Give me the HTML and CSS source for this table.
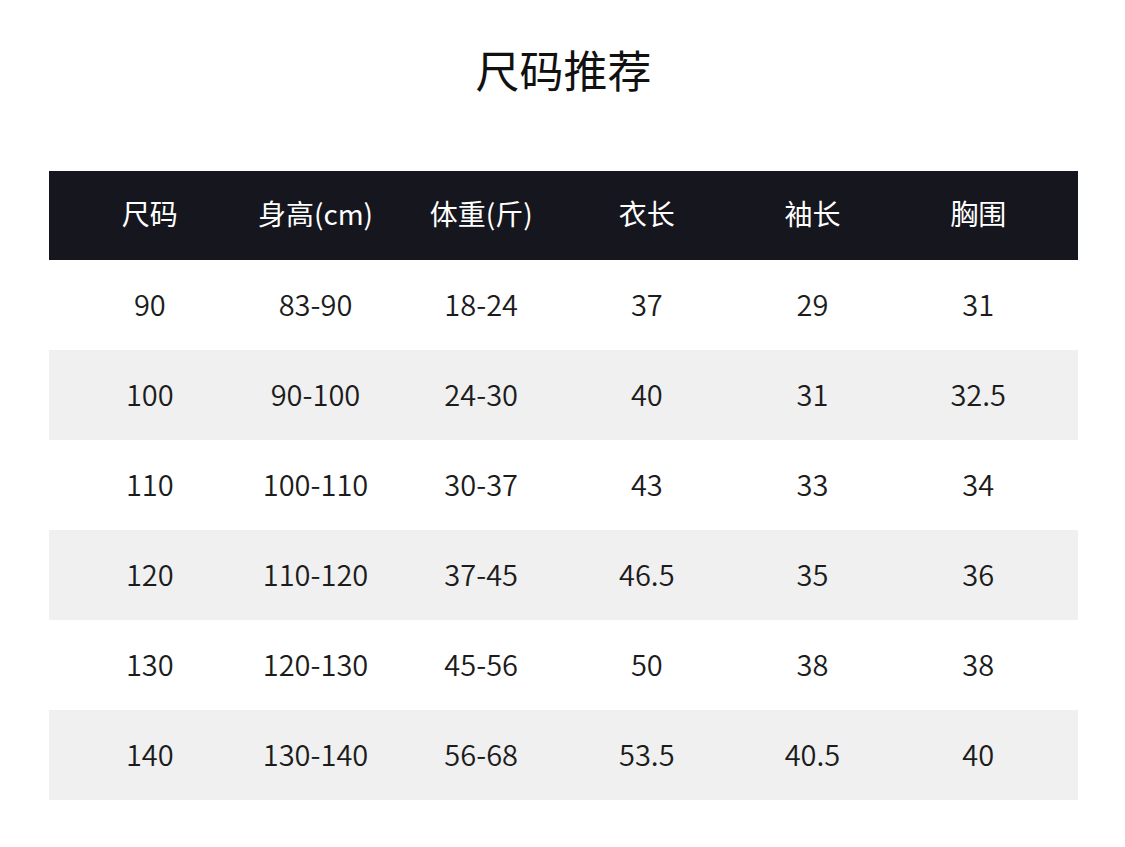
FILE: index.html
```html
<!DOCTYPE html>
<html lang="zh">
<head>
<meta charset="utf-8">
<title>尺码推荐</title>
<link rel="stylesheet" href="styles.css">
</head>
<body>
<div class="page">
  <h1 class="title">尺码推荐</h1>
  <div class="table">
    <div class="row head">
      <div>尺码</div><div>身高(cm)</div><div>体重(斤)</div><div>衣长</div><div>袖长</div><div>胸围</div>
    </div>
    <div class="row">
      <div>90</div><div>83-90</div><div>18-24</div><div>37</div><div>29</div><div>31</div>
    </div>
    <div class="row alt">
      <div>100</div><div>90-100</div><div>24-30</div><div>40</div><div>31</div><div>32.5</div>
    </div>
    <div class="row">
      <div>110</div><div>100-110</div><div>30-37</div><div>43</div><div>33</div><div>34</div>
    </div>
    <div class="row alt">
      <div>120</div><div>110-120</div><div>37-45</div><div>46.5</div><div>35</div><div>36</div>
    </div>
    <div class="row">
      <div>130</div><div>120-130</div><div>45-56</div><div>50</div><div>38</div><div>38</div>
    </div>
    <div class="row alt">
      <div>140</div><div>130-140</div><div>56-68</div><div>53.5</div><div>40.5</div><div>40</div>
    </div>
  </div>
</div>
</body>
</html>
```
FILE: styles.css
```css
html, body {
  margin: 0;
  padding: 0;
  background: #ffffff;
}
body {
  font-family: "Noto Sans CJK SC", "Noto Sans", sans-serif;
  color: #1a1a1a;
}
.page {
  width: 1125px;
  height: 847px;
  padding: 0 47px 0 49px;
  box-sizing: border-box;
}
.title {
  margin: 0;
  height: 171px;
  padding-top: 41px;
  box-sizing: border-box;
  text-align: center;
  font-size: 44px;
  font-weight: 400;
  line-height: 56px;
  color: #111;
}
.table {
  display: flex;
  flex-direction: column;
}
.row {
  display: grid;
  grid-template-columns: repeat(6, 1fr);
  height: 90px;
  align-items: center;
  padding: 0 17px 4px 18px;
  box-sizing: border-box;
  font-size: 29px;
  font-weight: 350;
  color: #1c1c1c;
}
.row > div {
  text-align: center;
}
.row.head {
  height: 89px;
  padding-bottom: 6px;
  background: #16161e;
  color: #ffffff;
  font-size: 28px;
  font-weight: 400;
}
.row.alt {
  background: #f0f0f0;
}
```
